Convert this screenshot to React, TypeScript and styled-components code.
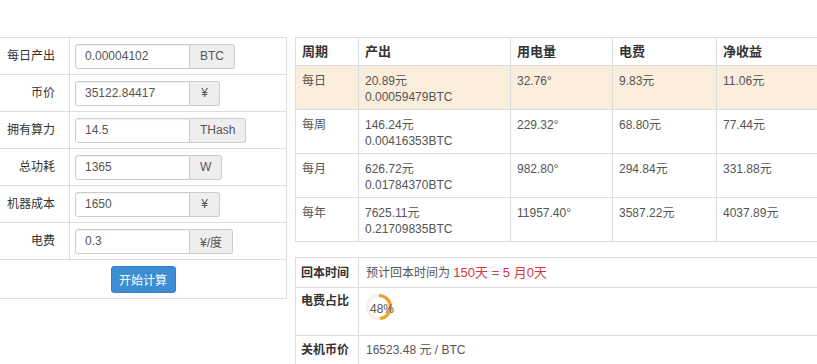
import React from "react";
import styled, { createGlobalStyle } from "styled-components";

const GlobalStyle = createGlobalStyle`
  html, body {
    margin: 0;
    padding: 0;
    background: #fff;
    overflow: hidden;
  }
  body {
    font-family: "Liberation Sans", "Noto Sans CJK SC", sans-serif;
    font-size: 12px;
    color: #555;
  }
`;

const fields = [
  { label: "每日产出", value: "0.00004102", unit: "BTC" },
  { label: "币价", value: "35122.84417", unit: "¥" },
  { label: "拥有算力", value: "14.5", unit: "THash" },
  { label: "总功耗", value: "1365", unit: "W" },
  { label: "机器成本", value: "1650", unit: "¥" },
  { label: "电费", value: "0.3", unit: "¥/度" },
];

const results = [
  { period: "每日", cny: "20.89元", btc: "0.00059479BTC", power: "32.76°", fee: "9.83元", net: "11.06元", active: true },
  { period: "每周", cny: "146.24元", btc: "0.00416353BTC", power: "229.32°", fee: "68.80元", net: "77.44元" },
  { period: "每月", cny: "626.72元", btc: "0.01784370BTC", power: "982.80°", fee: "294.84元", net: "331.88元" },
  { period: "每年", cny: "7625.11元", btc: "0.21709835BTC", power: "11957.40°", fee: "3587.22元", net: "4037.89元" },
];

export default function App() {
  return (
    <Page>
      <GlobalStyle />
      <FormPanel>
        {fields.map((f) => (
          <FieldRow key={f.label}>
            <FieldLabel>{f.label}</FieldLabel>
            <FieldCell>
              <Input defaultValue={f.value} />
              <Addon>{f.unit}</Addon>
            </FieldCell>
          </FieldRow>
        ))}
        <ButtonRow>
          <CalcButton>开始计算</CalcButton>
        </ButtonRow>
      </FormPanel>

      <ResultColumn>
        <DataTable>
          <colgroup>
            <col style={{ width: 63 }} />
            <col style={{ width: 152 }} />
            <col style={{ width: 102 }} />
            <col style={{ width: 104 }} />
            <col />
          </colgroup>
          <thead>
            <HeadRow>
              <HeadCell>周期</HeadCell>
              <HeadCell>产出</HeadCell>
              <HeadCell>用电量</HeadCell>
              <HeadCell>电费</HeadCell>
              <HeadCell>净收益</HeadCell>
            </HeadRow>
          </thead>
          <tbody>
            {results.map((r) => (
              <BodyRow key={r.period} $active={r.active}>
                <Cell>{r.period}</Cell>
                <Cell>
                  {r.cny}
                  <br />
                  {r.btc}
                </Cell>
                <Cell>{r.power}</Cell>
                <Cell>{r.fee}</Cell>
                <Cell>{r.net}</Cell>
              </BodyRow>
            ))}
          </tbody>
        </DataTable>

        <SummaryTable>
          <colgroup>
            <col style={{ width: 63 }} />
            <col />
          </colgroup>
          <tbody>
            <SummaryRow $h={30}>
              <SummaryLabel>回本时间</SummaryLabel>
              <SummaryCell>
                预计回本时间为 <Highlight>150天 = 5 月0天</Highlight>
              </SummaryCell>
            </SummaryRow>
            <SummaryRow $h={48} $top>
              <SummaryLabel>电费占比</SummaryLabel>
              <SummaryCell>
                <Donut percent={48} />
              </SummaryCell>
            </SummaryRow>
            <SummaryRow $h={29}>
              <SummaryLabel>关机币价</SummaryLabel>
              <SummaryCell>16523.48 元 / BTC</SummaryCell>
            </SummaryRow>
          </tbody>
        </SummaryTable>
      </ResultColumn>
    </Page>
  );
}

function Donut({ percent }: { percent: number }) {
  const r = 11.5;
  const c = 2 * Math.PI * r;
  return (
    <DonutWrap>
      <svg width="26" height="26" viewBox="0 0 26 26">
        <circle cx="13" cy="13" r={r} fill="none" stroke="#f4f1ec" strokeWidth="3" />
        <circle
          cx="13"
          cy="13"
          r={r}
          fill="none"
          stroke="#f0a024"
          strokeWidth="3"
          strokeDasharray={`${(c * percent) / 100} ${c}`}
          transform="rotate(-90 13 13)"
        />
      </svg>
      <DonutLabel>{percent}%</DonutLabel>
    </DonutWrap>
  );
}

const Page = styled.div`
  display: flex;
  align-items: flex-start;
  gap: 8px;
  padding-top: 37px;
  width: 825px;
`;

const FormPanel = styled.div`
  width: 286px;
  flex: none;
  border: 1px solid #ddd;
  border-left: none;
`;

const FieldRow = styled.div`
  display: grid;
  grid-template-columns: 70px 1fr;
  height: 36px;
  border-bottom: 1px solid #ddd;
`;

const FieldLabel = styled.div`
  border-right: 1px solid #ddd;
  text-align: right;
  padding-right: 14px;
  line-height: 36px;
  color: #333;
  white-space: nowrap;
`;

const FieldCell = styled.div`
  display: flex;
  align-items: center;
  padding-left: 5px;
`;

const Input = styled.input`
  box-sizing: border-box;
  width: 115px;
  height: 25px;
  padding: 0 9px;
  border: 1px solid #ccc;
  border-radius: 3px 0 0 3px;
  box-shadow: inset 0 1px 1px rgba(0, 0, 0, 0.06);
  font-family: inherit;
  font-size: 12px;
  color: #555;
  outline: none;
`;

const Addon = styled.span`
  box-sizing: border-box;
  height: 25px;
  display: flex;
  align-items: center;
  padding: 0 10px;
  min-width: 30px;
  justify-content: center;
  background: #eee;
  border: 1px solid #ccc;
  border-left: none;
  border-radius: 0 3px 3px 0;
  color: #555;
`;

const ButtonRow = styled.div`
  height: 38px;
  display: flex;
  align-items: center;
  justify-content: center;
`;

const CalcButton = styled.button`
  width: 65px;
  height: 27px;
  padding: 0;
  background: #3c8dd2;
  border: 1px solid #3380c2;
  border-radius: 3px;
  color: #fff;
  font-family: inherit;
  font-size: 12px;
  cursor: pointer;
`;

const ResultColumn = styled.div`
  flex: 1;
  display: flex;
  flex-direction: column;
  gap: 15px;
`;

const DataTable = styled.table`
  width: 100%;
  border-collapse: collapse;
  table-layout: fixed;
`;

const HeadRow = styled.tr`
  height: 28px;
`;

const HeadCell = styled.th`
  border: 1px solid #ddd;
  padding: 0 6px;
  text-align: left;
  font-size: 13px;
  line-height: 16px;
  font-weight: bold;
  color: #333;
  vertical-align: middle;
  white-space: nowrap;
`;

const BodyRow = styled.tr<{ $active?: boolean }>`
  height: 44px;
  background: ${(p) => (p.$active ? "#fbeddc" : "transparent")};
`;

const Cell = styled.td`
  box-sizing: border-box;
  height: 44px;
  border: 1px solid #ddd;
  padding: 7px 6px 3px;
  line-height: 16px;
  vertical-align: top;
  color: #555;
  white-space: nowrap;
`;

const SummaryTable = styled.table`
  width: 100%;
  border-collapse: collapse;
  table-layout: fixed;
`;

const SummaryRow = styled.tr<{ $h: number; $top?: boolean }>`
  height: ${(p) => p.$h}px;
  & > * {
    vertical-align: ${(p) => (p.$top ? "top" : "middle")};
  }
`;

const SummaryLabel = styled.th`
  border: 1px solid #ddd;
  padding: 5px 5px;
  line-height: 16px;
  text-align: left;
  font-size: 12px;
  font-weight: bold;
  color: #333;
  white-space: nowrap;
`;

const SummaryCell = styled.td`
  border: 1px solid #ddd;
  padding: 4px 7px;
  line-height: 16px;
  color: #555;
  white-space: nowrap;
`;

const Highlight = styled.span`
  color: #d9363e;
  font-size: 13px;
`;

const DonutWrap = styled.div`
  position: relative;
  width: 26px;
  height: 26px;
  margin-top: 2px;
`;

const DonutLabel = styled.span`
  position: absolute;
  left: 4px;
  top: 7px;
  font-size: 12px;
  color: #555;
  white-space: nowrap;
`;
